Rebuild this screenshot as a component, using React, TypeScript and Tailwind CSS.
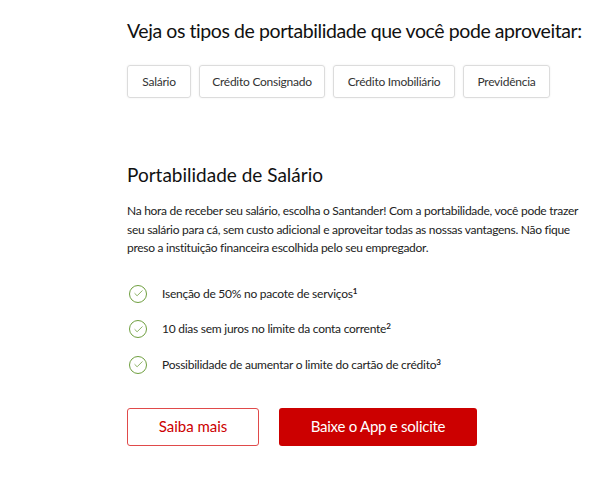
import { Check } from 'lucide-react'

const tabs = [
  { label: 'Salário', width: 'w-[64px]' },
  { label: 'Crédito Consignado', width: 'w-[126px]' },
  { label: 'Crédito Imobiliário', width: 'w-[122px]' },
  { label: 'Previdência', width: 'w-[87px]' },
]

const benefits = [
  { text: 'Isenção de 50% no pacote de serviços', note: '1' },
  { text: '10 dias sem juros no limite da conta corrente', note: '2' },
  { text: 'Possibilidade de aumentar o limite do cartão de crédito', note: '3' },
]

export default function App() {
  return (
    <div className="h-[500px] w-[606px] overflow-hidden bg-white pl-[127px] pt-[17px] font-['Lato',sans-serif] text-[#222]">
      <h2 className="whitespace-nowrap text-[19.5px] leading-[28px] tracking-[-0.42px] text-[#111]">
        Veja os tipos de portabilidade que você pode aproveitar:
      </h2>

      <div className="mt-[20px] flex gap-2">
        {tabs.map((tab) => (
          <div
            key={tab.label}
            className={`flex h-[33px] items-center justify-center rounded-[3px] border border-[#dcdcdc] text-[12px] tracking-[-0.25px] text-[#333] shadow-[0_0_2px_rgba(0,0,0,0.08)] ${tab.width}`}
          >
            {tab.label}
          </div>
        ))}
      </div>

      <h3 className="mt-[64px] text-[19px] leading-[26px] text-[#111]">Portabilidade de Salário</h3>

      <p className="mt-[14px] whitespace-nowrap text-[12px] leading-[18.5px] tracking-[-0.28px] text-[#222]">
        Na hora de receber seu salário, escolha o Santander! Com a portabilidade, você pode trazer
        <br />
        seu salário para cá, sem custo adicional e aproveitar todas as nossas vantagens. Não fique
        <br />
        preso a instituição financeira escolhida pelo seu empregador.
      </p>

      <ul className="mt-[27px] flex flex-col gap-[17.5px]">
        {benefits.map((b) => (
          <li key={b.note} className="flex h-[18px] items-center">
            <span className="ml-[2px] flex h-[18px] w-[18px] items-center justify-center rounded-full border border-[#6f9f3f]">
              <Check className="h-[11px] w-[11px] text-[#6f9f3f]" strokeWidth={1.75} />
            </span>
            <span className="ml-[15px] text-[12px] tracking-[-0.25px] text-[#222]">
              {b.text}
              <sup className="text-[8px] font-bold">{b.note}</sup>
            </span>
          </li>
        ))}
      </ul>

      <div className="mt-[34px] flex gap-5">
        <button className="h-[38px] w-[132px] rounded-[3px] border border-[#e04a4a] bg-white text-[15px] text-[#cc0000]">
          Saiba mais
        </button>
        <button className="h-[38px] w-[198px] rounded-[3px] bg-[#cc0000] text-[15px] tracking-[-0.25px] text-white">
          Baixe o App e solicite
        </button>
      </div>
    </div>
  )
}
